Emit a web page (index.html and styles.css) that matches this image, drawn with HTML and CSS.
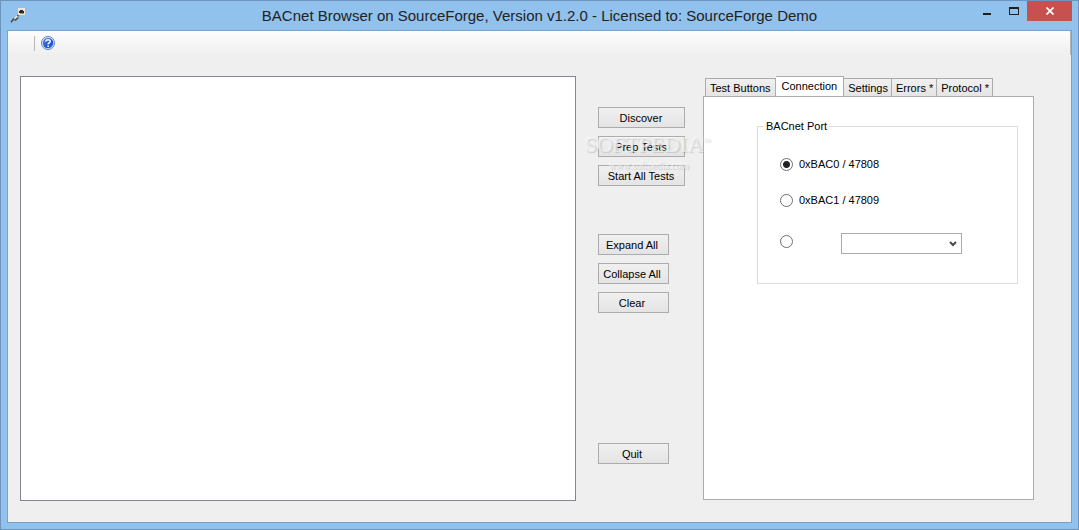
FILE: index.html
```html
<!DOCTYPE html>
<html lang="en">
<head>
<meta charset="utf-8">
<title>BACnet Browser</title>
<link rel="stylesheet" href="styles.css">
</head>
<body>
<div class="window">
  <header class="titlebar">
    <svg class="app-icon" width="16" height="16" viewBox="0 0 16 16" aria-hidden="true">
      <path d="M1 15L4 10.500L7 7.500L9.500 9L8 12L5 14L3 13.500z" fill="#8d9494"/>
      <path d="M1 15.200L4 11.500M5 13.500L8 11" stroke="#4b4b4b" stroke-width="1.500"/>
      <path d="M4.500 11.500L7.500 8.500" stroke="#e9f1ee" stroke-width="1.600"/>
      <path d="M7 9L9.500 7.500" stroke="#5a5a5a" stroke-width="1.200"/>
      <path d="M8 1h7v7H8z" fill="#ece7dd"/>
      <path d="M10 3h3v1h1v2H9V4h1z" fill="#2c2a29"/>
      <path d="M10 6h4v1h-4z" fill="#a38f58"/>
    </svg>
    <h1 class="title">BACnet Browser on SourceForge, Version v1.2.0 - Licensed to: SourceForge Demo</h1>
    <div class="controls">
      <button class="control" type="button" aria-label="Minimize"><svg width="10" height="10" viewBox="0 0 10 10"><path d="M1 7h8v2H1z" fill="#1e1e1e"/></svg></button>
      <button class="control" type="button" aria-label="Maximize"><svg width="10" height="8" viewBox="0 0 10 8"><path d="M0 0h10v8H0zM1 2v5h8V2z" fill="#1e1e1e" fill-rule="evenodd"/></svg></button>
      <button class="control close" type="button" aria-label="Close"><svg width="8" height="8" viewBox="0 0 8 8"><path d="M.5 .5l7 7M7.500 .5l-7 7" stroke="#fff" stroke-width="1.700"/></svg></button>
    </div>
  </header>
  <div class="client">
    <div class="toolbar">
      <span class="separator"></span>
      <button class="help" type="button" aria-label="Help">
        <svg width="14" height="14" viewBox="0 0 14 14">
          <defs><linearGradient id="ball" x1="0" y1="0" x2="1" y2="1"><stop offset="0" stop-color="#6f9df0"/><stop offset=".6" stop-color="#1a4fd2"/><stop offset="1" stop-color="#2f7df0"/></linearGradient></defs>
          <circle cx="7" cy="7" r="6.500" fill="#e6eefb" stroke="#5d81b8"/>
          <circle cx="7" cy="7" r="5.300" fill="url(#ball)"/>
          <path d="M5 5.600C5 3.200 9.200 3.200 9.200 5.400C9.200 6.800 7.100 6.900 7.100 8.400" fill="none" stroke="#fff" stroke-width="1.500"/>
          <path d="M6.300 9.400h1.600V11H6.300z" fill="#fff"/>
        </svg>
      </button>
    </div>
    <main class="content">
      <section class="tree" aria-label="Devices"></section>
      <div class="actions">
        <div class="group wide">
          <button class="btn" type="button">Discover</button>
          <button class="btn" type="button">Prep Tests</button>
          <button class="btn" type="button">Start All Tests</button>
          <div class="watermark"><span class="brand">SOFTPEDIA</span><span class="tm">™</span><span class="site">www.softpedia.com</span></div>
        </div>
        <div class="group">
          <button class="btn" type="button">Expand All</button>
          <button class="btn" type="button">Collapse All</button>
          <button class="btn" type="button">Clear</button>
        </div>
        <div class="group last">
          <button class="btn" type="button">Quit</button>
        </div>
      </div>
      <section class="tabs">
        <div class="tablist" role="tablist">
          <button class="tab" type="button" role="tab">Test Buttons</button>
          <button class="tab active" type="button" role="tab" aria-selected="true">Connection</button>
          <button class="tab" type="button" role="tab">Settings</button>
          <button class="tab" type="button" role="tab">Errors *</button>
          <button class="tab" type="button" role="tab">Protocol *</button>
        </div>
        <div class="panel" role="tabpanel">
          <fieldset class="port">
            <legend class="legend">BACnet Port</legend>
            <label class="option"><input class="radio" type="radio" name="port" checked>0xBAC0 / 47808</label>
            <label class="option"><input class="radio" type="radio" name="port">0xBAC1 / 47809</label>
            <div class="custom">
              <input class="radio" type="radio" name="port" aria-label="Other port">
              <div class="combo">
                <select class="select" aria-label="Port number"><option></option></select>
                <svg class="chevron" width="8" height="6" viewBox="0 0 8 6" aria-hidden="true"><path d="M1 1l3 3 3-3" fill="none" stroke="#4a4a4a" stroke-width="2"/></svg>
              </div>
            </div>
          </fieldset>
        </div>
      </section>
    </main>
  </div>
</div>
</body>
</html>
```
FILE: styles.css
```css
* { box-sizing: border-box; }
body {
  margin: 0;
  font: 11px/13px "Liberation Sans", Arial, sans-serif;
  color: #000;
}
button, select { font: inherit; color: inherit; }
.window {
  display: flex;
  flex-direction: column;
  min-height: 100vh;
  padding: 0 6px 6px;
  background: #91c1ed;
  border: 1px solid #6d94bb;
}
.titlebar {
  display: grid;
  grid-template-columns: 1fr auto 1fr;
  align-items: start;
  height: 29px;
}
.app-icon { margin: 6px 0 0 3px; }
.title {
  margin: 5px 0 0;
  font-size: 15px;
  line-height: 20px;
  font-weight: 400;
  color: #222;
  white-space: nowrap;
}
.controls { display: flex; justify-content: flex-end; }
.control {
  display: flex;
  align-items: center;
  justify-content: center;
  width: 27px;
  height: 20px;
  padding: 0;
  background: transparent;
  border: 0;
}
.close { width: 45px; background: #c75050; }
.client {
  flex: 1;
  display: flex;
  flex-direction: column;
  background: #efefef;
  border: 1px solid #76a3cd;
}
.toolbar {
  display: flex;
  align-items: center;
  gap: 6px;
  height: 24px;
  padding-left: 26px;
  background: linear-gradient(#fdfdfd, #efefef);
  border-right: 1px solid #b5b5b5;
}
.separator { width: 1px; height: 15px; background: #b8b8b8; }
.help { display: flex; padding: 0; background: none; border: 0; }
.content {
  flex: 1;
  display: flex;
  padding: 21px 37px 21px 12px;
}
.tree {
  flex: 1;
  background: #fff;
  border: 1px solid #828790;
}
.actions {
  display: flex;
  flex-direction: column;
  gap: 48px;
  width: 87px;
  margin: 0 18px 0 22px;
  padding: 31px 0 37px;
}
.group {
  position: relative;
  display: flex;
  flex-direction: column;
  gap: 8px;
  width: 71px;
}
.wide { width: 87px; }
.last { margin-top: auto; }
.btn {
  height: 21px;
  padding: 1px 3px 0 0;
  background: linear-gradient(#f0f0f0, #e4e4e4);
  border: 1px solid #acacac;
}
.wide .btn { padding-right: 1px; }
.watermark {
  position: absolute;
  top: 26px;
  left: -13px;
  width: 132px;
  color: rgba(236, 236, 236, 0.75);
  font-family: "Liberation Serif", serif;
  text-shadow: 1px 1px 1px rgba(150, 150, 150, 0.4), -1px -1px 0 rgba(255, 255, 255, 0.5);
  pointer-events: none;
}
.brand { font-size: 22px; line-height: 24px; }
.tm { font-size: 8px; vertical-align: 8px; }
.site { display: block; padding-left: 24px; font-size: 10px; line-height: 18px; }
.tabs {
  flex: 0 1 331px;
  display: flex;
  flex-direction: column;
  margin-bottom: 1px;
}
.tablist {
  display: flex;
  align-items: flex-end;
  height: 21px;
  margin-bottom: -1px;
  padding-left: 2px;
}
.tab {
  flex: none;
  height: 19px;
  padding: 1px 3px 0 4px;
  background: linear-gradient(#f0f0f0, #e5e5e5);
  border: 1px solid #acacac;
  border-left-width: 0;
  white-space: nowrap;
}
.tab:first-child { padding-right: 4px; border-left-width: 1px; }
.active {
  height: 21px;
  padding: 0 6px 1px;
  background: #fff;
  border-bottom-color: #fff;
}
.panel {
  flex: 1;
  padding: 23px 15px 0 53px;
  background: #fff;
  border: 1px solid #acacac;
}
.port {
  min-width: 0;
  height: 164px;
  margin: 0;
  padding: 24px 22px 0;
  border: 1px solid #dcdcdc;
}
.legend { margin-left: -16px; padding: 0 2px; }
.option {
  display: flex;
  align-items: center;
  gap: 6px;
  margin-bottom: 22px;
  line-height: 14px;
}
.radio {
  appearance: none;
  flex: none;
  width: 13px;
  height: 13px;
  margin: 0;
  background: #fff;
  border: 1px solid #707070;
  border-radius: 50%;
}
.radio:checked { background: radial-gradient(circle, #212121 3px, #fff 4px); }
.custom { display: flex; align-items: flex-start; gap: 48px; margin-top: 28px; }
.custom .combo { margin-top: -2px; }
.combo { position: relative; flex: 0 1 121px; }
.select {
  display: block;
  appearance: none;
  width: 100%;
  height: 21px;
  padding: 0 18px 0 4px;
  background: #fff;
  border: 1px solid #acacac;
  border-radius: 0;
}
.chevron { position: absolute; top: 8px; right: 5px; pointer-events: none; }
```
